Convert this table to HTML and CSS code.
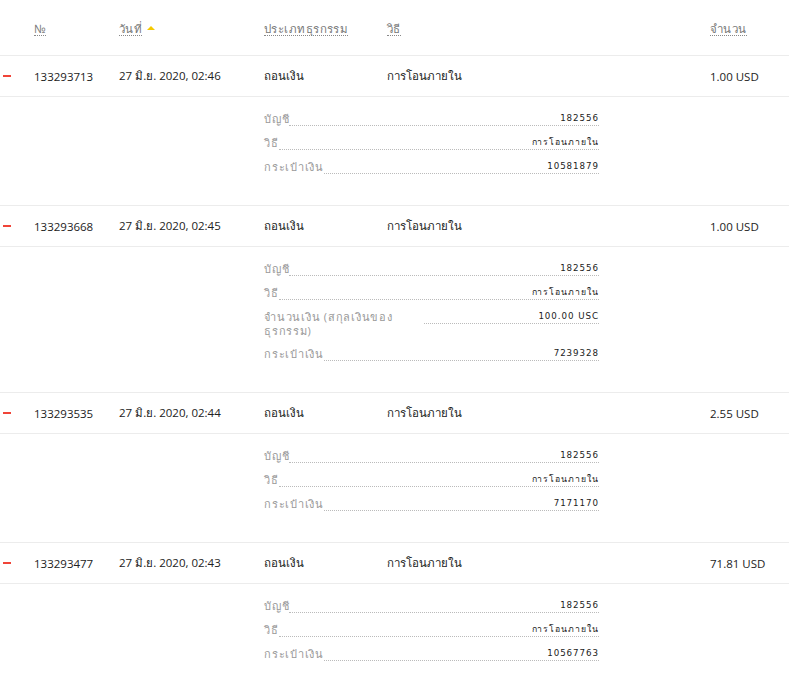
FILE: index.html
```html
<!DOCTYPE html>
<html lang="th">
<head>
<meta charset="utf-8">
<link rel="stylesheet" href="styles.css">
</head>
<body>
<div class="table">
  <div class="row head">
    <div class="c c-sign"></div>
    <div class="c c-id"><span class="th">№</span></div>
    <div class="c c-date"><span class="th">วันที่</span><span class="sort"></span></div>
    <div class="c c-type"><span class="th">ประเภทธุรกรรม</span></div>
    <div class="c c-method"><span class="th">วิธี</span></div>
    <div class="c c-amount"><span class="th">จำนวน</span></div>
  </div>

  <div class="row">
    <div class="c c-sign"><span class="minus"></span></div>
    <div class="c c-id">133293713</div>
    <div class="c c-date">27 มิ.ย. 2020, 02:46</div>
    <div class="c c-type">ถอนเงิน</div>
    <div class="c c-method">การโอนภายใน</div>
    <div class="c c-amount">1.00 USD</div>
  </div>
  <div class="details">
    <div class="list">
      <div class="item"><span class="lbl">บัญชี</span><span class="val">182556</span></div>
      <div class="item"><span class="lbl">วิธี</span><span class="val">การโอนภายใน</span></div>
      <div class="item"><span class="lbl">กระเป๋าเงิน</span><span class="val">10581879</span></div>
    </div>
  </div>

  <div class="row">
    <div class="c c-sign"><span class="minus"></span></div>
    <div class="c c-id">133293668</div>
    <div class="c c-date">27 มิ.ย. 2020, 02:45</div>
    <div class="c c-type">ถอนเงิน</div>
    <div class="c c-method">การโอนภายใน</div>
    <div class="c c-amount">1.00 USD</div>
  </div>
  <div class="details">
    <div class="list">
      <div class="item"><span class="lbl">บัญชี</span><span class="val">182556</span></div>
      <div class="item"><span class="lbl">วิธี</span><span class="val">การโอนภายใน</span></div>
      <div class="item"><span class="lbl">จำนวนเงิน (สกุลเงินของ ธุรกรรม)</span><span class="val">100.00 USC</span></div>
      <div class="item"><span class="lbl">กระเป๋าเงิน</span><span class="val">7239328</span></div>
    </div>
  </div>

  <div class="row">
    <div class="c c-sign"><span class="minus"></span></div>
    <div class="c c-id">133293535</div>
    <div class="c c-date">27 มิ.ย. 2020, 02:44</div>
    <div class="c c-type">ถอนเงิน</div>
    <div class="c c-method">การโอนภายใน</div>
    <div class="c c-amount">2.55 USD</div>
  </div>
  <div class="details">
    <div class="list">
      <div class="item"><span class="lbl">บัญชี</span><span class="val">182556</span></div>
      <div class="item"><span class="lbl">วิธี</span><span class="val">การโอนภายใน</span></div>
      <div class="item"><span class="lbl">กระเป๋าเงิน</span><span class="val">7171170</span></div>
    </div>
  </div>

  <div class="row">
    <div class="c c-sign"><span class="minus"></span></div>
    <div class="c c-id">133293477</div>
    <div class="c c-date">27 มิ.ย. 2020, 02:43</div>
    <div class="c c-type">ถอนเงิน</div>
    <div class="c c-method">การโอนภายใน</div>
    <div class="c c-amount">71.81 USD</div>
  </div>
  <div class="details">
    <div class="list">
      <div class="item"><span class="lbl">บัญชี</span><span class="val">182556</span></div>
      <div class="item"><span class="lbl">วิธี</span><span class="val">การโอนภายใน</span></div>
      <div class="item"><span class="lbl">กระเป๋าเงิน</span><span class="val">10567763</span></div>
    </div>
  </div>
</div>
</body>
</html>
```

FILE: styles.css
```css
html, body {
  margin: 0;
  padding: 0;
  background: #fff;
}
body {
  font-family: "Open Sans", "Noto Sans", "DejaVu Sans", sans-serif;
  font-size: 11.5px;
  color: #222;
}
.table {
  width: 789px;
}
.row {
  display: grid;
  grid-template-columns: 34px 85px 145px 123px 323px 1fr;
  align-items: center;
  height: 40px;
  border-bottom: 1px solid #ececec;
}
.row.head {
  height: 55px;
}
.head .c {
  padding-top: 2px;
}
.th {
  color: #777;
  border-bottom: 1px dotted #888;
  line-height: 13px;
  letter-spacing: 0.45px;
  display: inline-block;
}
.sort {
  display: inline-block;
  width: 0;
  height: 0;
  border-left: 4px solid transparent;
  border-right: 4px solid transparent;
  border-bottom: 4px solid #f5c900;
  margin-left: 5px;
  vertical-align: 3px;
}
.c {
  white-space: nowrap;
}
.c-sign {
  display: flex;
  align-items: center;
}
.minus {
  display: block;
  width: 8px;
  height: 2px;
  background: #f04438;
  margin-left: 3px;
}
.details {
  padding: 15px 0 31px 264px;
  border-bottom: 1px solid #ececec;
}
.list {
  width: 335px;
  display: flex;
  flex-direction: column;
  gap: 10px;
}
.item {
  display: flex;
  align-items: flex-start;
  line-height: 13px;
}
.lbl {
  color: #999;
  font-size: 11px;
  line-height: 13.5px;
  letter-spacing: 0.75px;
  max-width: 160px;
  flex: 0 1 auto;
}
.val {
  flex: 1 1 auto;
  text-align: right;
  border-bottom: 1px dotted #bbb;
  font-family: "DejaVu Sans", sans-serif;
  font-size: 8.7px;
  letter-spacing: 0.95px;
  color: #222;
  white-space: nowrap;
}
```
